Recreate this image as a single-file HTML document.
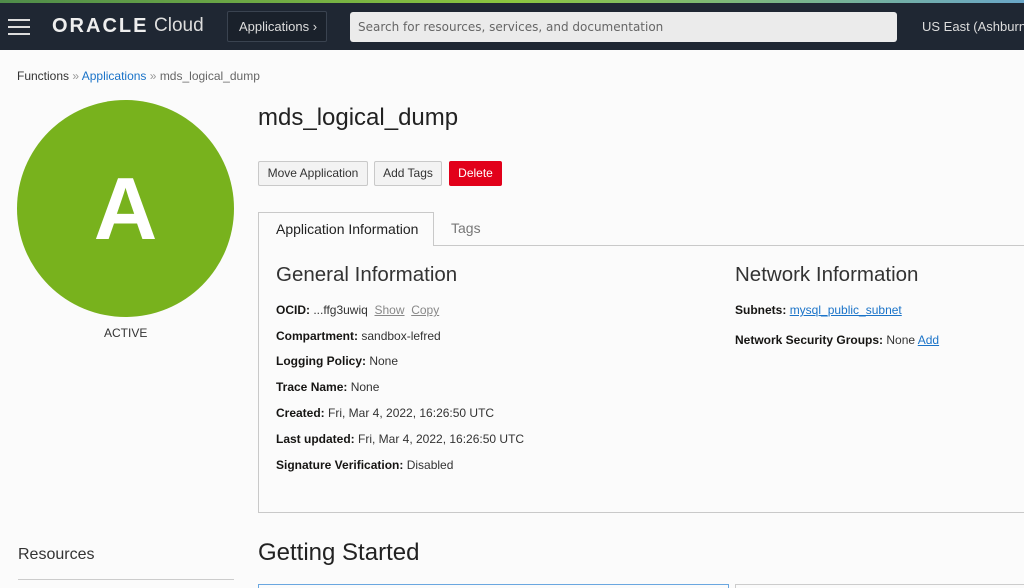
<!DOCTYPE html>
<html><head><style>
*{box-sizing:border-box;margin:0;padding:0}
body{width:1024px;height:587px;overflow:hidden;background:#fbfbfb;font-family:"Liberation Sans",sans-serif;color:#161513;position:relative}
.a{position:absolute;white-space:nowrap}
.top{position:absolute;left:0;top:0;width:1024px;height:50px;background:#1f2733}
.grad{position:absolute;left:0;top:0;width:1024px;height:3px;background:linear-gradient(90deg,#4f8c4a,#8cc63f 50%,#6aa7c9)}
.btn{position:absolute;top:161px;height:25px;border:1px solid #c9c9c9;background:#f3f3f3;border-radius:2px;font-size:12px;line-height:23px;text-align:center;color:#333}
.lbl{font-size:12px;color:#333}
.lbl b{color:#161513}
a{color:#1a73c8}
.lbl a{text-decoration:underline}
.u{text-decoration:underline;color:#888}
</style></head><body>
<div class="top"></div><div class="grad"></div>
<div class="a" style="left:8px;top:19px;width:22px;height:2px;background:#ddd"></div>
<div class="a" style="left:8px;top:26px;width:22px;height:2px;background:#ddd"></div>
<div class="a" style="left:8px;top:33px;width:22px;height:2px;background:#ddd"></div>
<div class="a" style="left:52px;top:15px;font-size:20px;font-weight:bold;color:#eee;letter-spacing:2px">ORACLE</div>
<div class="a" style="left:154px;top:15px;font-size:19px;color:#ddd">Cloud</div>
<div class="a" style="left:227px;top:11px;width:100px;height:31px;border:1px solid #3a4350;background:#1a212b;border-radius:2px;color:#ddd;font-size:13px;line-height:29px;padding-left:11px">Applications ›</div>
<div class="a" style="left:350px;top:12px;width:547px;height:30px;background:#ebebeb;border-radius:3px;color:#666;font-size:12px;line-height:30px;padding-left:8px;font-family:'DejaVu Sans',sans-serif">Search for resources, services, and documentation</div>
<div class="a" style="left:922px;top:19px;font-size:13px;color:#ddd">US East (Ashburn)</div>

<div class="a" style="left:17px;top:69px;font-size:12px;color:#333">Functions <span style="color:#999">»</span> <a style="text-decoration:none">Applications</a> <span style="color:#999">»</span> <span style="color:#666">mds_logical_dump</span></div>
<div class="a" style="left:17px;top:100px;width:217px;height:217px;border-radius:50%;background:#78b21d;color:#fff;font-size:88px;font-weight:bold;text-align:center;line-height:217px">A</div>
<div class="a" style="left:104px;top:326px;font-size:12px;color:#333">ACTIVE</div>

<div class="a" style="left:258px;top:104px;font-size:24px;color:#222">mds_logical_dump</div>
<div class="btn" style="left:258px;width:110px">Move Application</div>
<div class="btn" style="left:374px;width:68px">Add Tags</div>
<div class="btn" style="left:449px;width:53px;background:#e2001a;border-color:#e2001a;color:#fff">Delete</div>

<div class="a" style="left:258px;top:245px;width:780px;height:268px;border:1px solid #c9c9c9;border-right:none"></div>
<div class="a" style="left:258px;top:212px;width:176px;height:34px;border:1px solid #c9c9c9;border-bottom:none;background:#fbfbfb;font-size:14px;line-height:32px;padding-left:17px;color:#222">Application Information</div>
<div class="a" style="left:451px;top:220px;font-size:14px;color:#777">Tags</div>

<div class="a" style="left:276px;top:263px;font-size:20.5px;color:#333">General Information</div>
<div class="a lbl" style="left:276px;top:303px"><b>OCID:</b> ...ffg3uwiq &nbsp;<span class="u">Show</span>&nbsp; <span class="u">Copy</span></div>
<div class="a lbl" style="left:276px;top:329px"><b>Compartment:</b> sandbox-lefred</div>
<div class="a lbl" style="left:276px;top:354px"><b>Logging Policy:</b> None</div>
<div class="a lbl" style="left:276px;top:380px"><b>Trace Name:</b> None</div>
<div class="a lbl" style="left:276px;top:406px"><b>Created:</b> Fri, Mar 4, 2022, 16:26:50 UTC</div>
<div class="a lbl" style="left:276px;top:432px"><b>Last updated:</b> Fri, Mar 4, 2022, 16:26:50 UTC</div>
<div class="a lbl" style="left:276px;top:458px"><b>Signature Verification:</b> Disabled</div>

<div class="a" style="left:735px;top:263px;font-size:20.5px;color:#333">Network Information</div>
<div class="a lbl" style="left:735px;top:303px"><b>Subnets:</b> <a>mysql_public_subnet</a></div>
<div class="a lbl" style="left:735px;top:333px"><b>Network Security Groups:</b> None <a>Add</a></div>

<div class="a" style="left:18px;top:546px;font-size:16px;color:#333">Resources</div>
<div class="a" style="left:18px;top:579px;width:216px;height:1px;background:#ccc"></div>
<div class="a" style="left:258px;top:539px;font-size:24px;color:#222">Getting Started</div>
<div class="a" style="left:258px;top:584px;width:471px;height:4px;border:1px solid #6aa7e0;border-bottom:none"></div>
<div class="a" style="left:735px;top:584px;width:300px;height:4px;border:1px solid #ccc;border-bottom:none"></div>
</body></html>
